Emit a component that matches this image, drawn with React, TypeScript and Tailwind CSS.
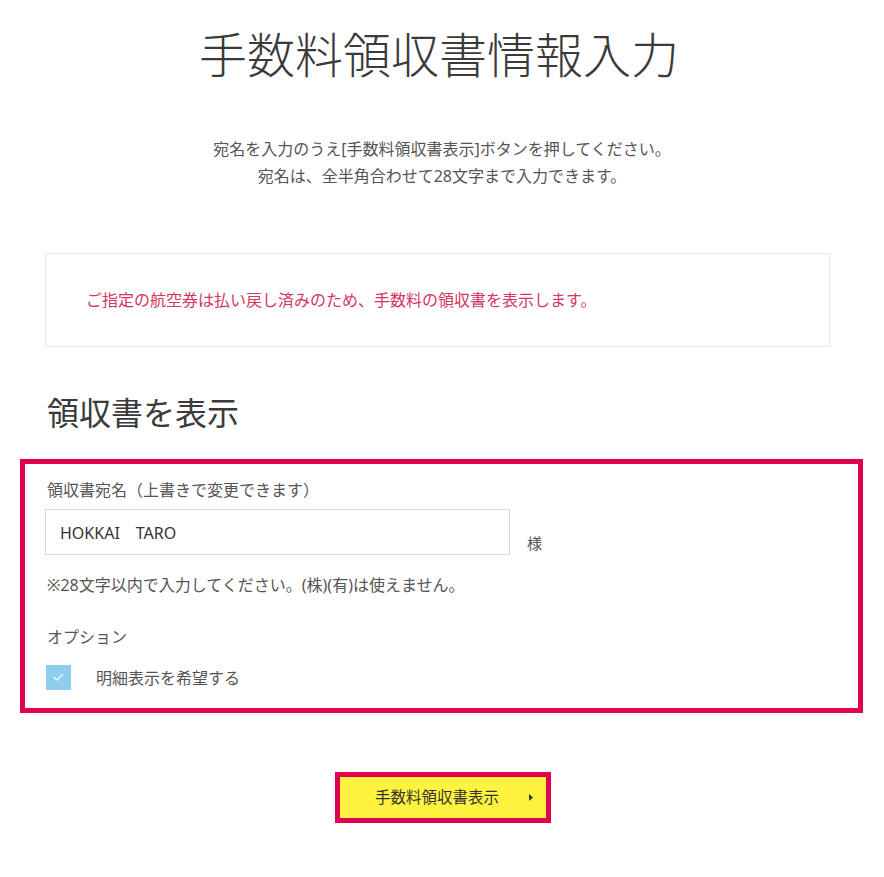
import { Check } from "lucide-react";

const font = { fontFamily: '"Noto Sans", "Noto Sans CJK JP", sans-serif' };

export default function App() {
  return (
    <div className="min-h-[877px] w-full bg-white text-[#444] font-['Noto_Sans','Noto_Sans_CJK_JP',sans-serif]">
      <h1 className="pt-[31px] pr-[6px] text-center text-[48px] leading-[48px] font-light text-[#3a3a3a]">
        手数料領収書情報入力
      </h1>

      <div className="mt-[57px] text-center text-[16px] leading-[27px] text-[#555]">
        <p>宛名を入力のうえ[手数料領収書表示]ボタンを押してください。</p>
        <p>宛名は、全半角合わせて28文字まで入力できます。</p>
      </div>

      <div className="ml-[45px] mt-[63px] flex h-[94px] w-[785px] items-center border border-[#e6e6e6] pl-[40px]">
        <p className="text-[16px] text-[#d4365f]">
          ご指定の航空券は払い戻し済みのため、手数料の領収書を表示します。
        </p>
      </div>

      <h2 className="mx-[47px] mt-[50px] text-[32px] leading-[31px] text-[#3a3a3a]">
        領収書を表示
      </h2>

      <div className="ml-[20px] mt-[31px] w-[843px] border-[5px] border-[#e0004f] pb-[18px] pl-[20px] pt-[16px]">
        <label className="block pl-[2px] text-[16px] leading-[20px] text-[#555]">
          領収書宛名（上書きで変更できます）
        </label>
        <div className="mt-[9px] flex items-end gap-[17px]">
          <input
            readOnly
            value="HOKKAI　TARO"
            style={font}
            className="h-[46px] w-[465px] border border-[#d9d9d9] px-[14px] text-[16px] text-[#333] outline-none"
          />
          <span className="mb-[1px] text-[15px] text-[#555]">様</span>
        </div>
        <p className="mt-[20px] pl-[2px] text-[16px] leading-[20px] text-[#555]">
          ※28文字以内で入力してください。(株)(有)は使えません。
        </p>
        <p className="mt-[32px] pl-[2px] text-[16px] leading-[20px] text-[#555]">
          オプション
        </p>
        <div className="mt-[18px] flex items-center gap-[25px] pl-[1px]">
          <div className="flex h-[25px] w-[25px] items-center justify-center bg-[#8fcdef]">
            <Check className="h-[13px] w-[13px] text-white" strokeWidth={2} />
          </div>
          <span className="text-[16px] text-[#555]">明細表示を希望する</span>
        </div>
      </div>

      <div className="mt-[59px] flex justify-center pl-[2px]">
        <button className="flex h-[51px] w-[216px] items-center border-[5px] border-[#e0004f] bg-[#fff33f] pl-[35px] pr-[13px] text-[15.5px] text-[#333]">
          <span className="flex-1 text-left">手数料領収書表示</span>
          <svg width="4" height="7" viewBox="0 0 4 7" className="fill-[#333]">
            <path d="M0 0 L4 3.5 L0 7 Z" />
          </svg>
        </button>
      </div>
    </div>
  );
}
